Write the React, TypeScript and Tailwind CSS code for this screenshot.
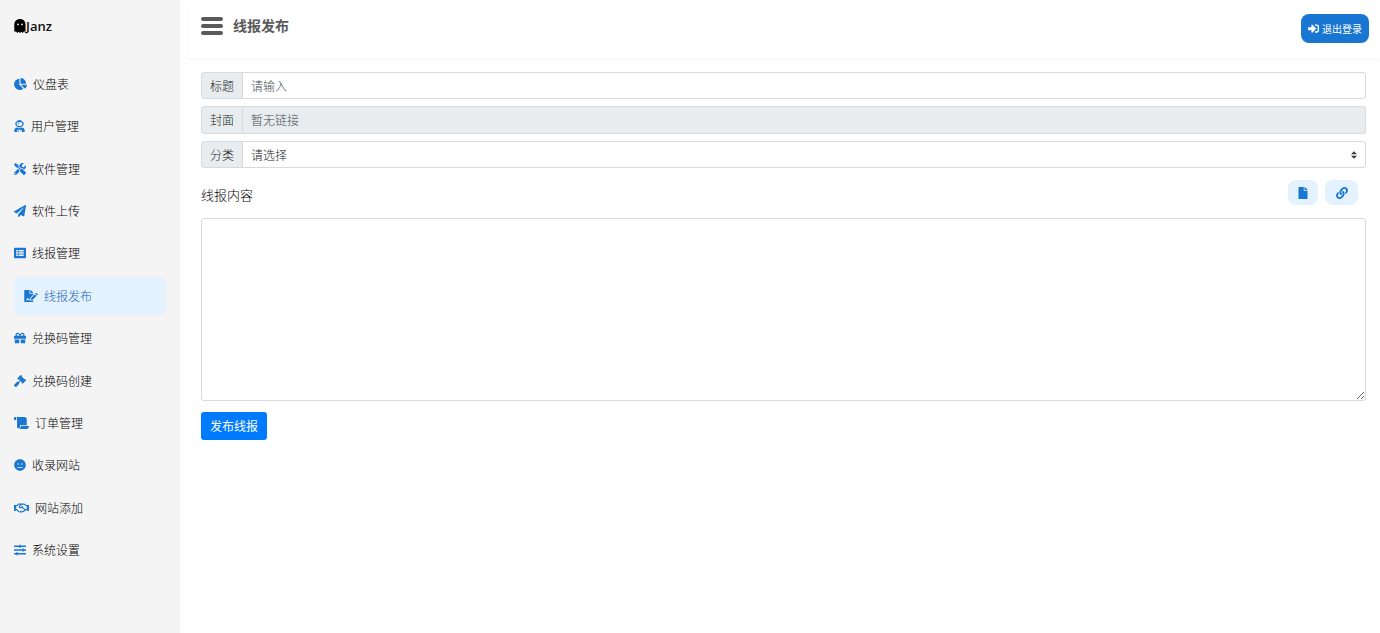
import React, { useState, ChangeEvent } from 'react';
import type { IconType } from 'react-icons';
import {
  FaChartPie,
  FaUserAstronaut,
  FaTools,
  FaPaperPlane,
  FaListAlt,
  FaFileSignature,
  FaGift,
  FaGavel,
  FaScroll,
  FaMeh,
  FaRegHandshake,
  FaSlidersH,
  FaSignInAlt,
  FaFile,
  FaLink,
} from 'react-icons/fa';

interface NavItem {
  label: string;
  icon: IconType;
  iconClass: string;
  active?: boolean;
}

const navItems: NavItem[] = [
  { label: '仪盘表', icon: FaChartPie, iconClass: 'w-[13px]' },
  { label: '用户管理', icon: FaUserAstronaut, iconClass: 'w-[11px]' },
  { label: '软件管理', icon: FaTools, iconClass: 'w-3' },
  { label: '软件上传', icon: FaPaperPlane, iconClass: 'w-3' },
  { label: '线报管理', icon: FaListAlt, iconClass: 'w-3' },
  { label: '线报发布', icon: FaFileSignature, iconClass: 'w-[14px]', active: true },
  { label: '兑换码管理', icon: FaGift, iconClass: 'w-3' },
  { label: '兑换码创建', icon: FaGavel, iconClass: 'w-3' },
  { label: '订单管理', icon: FaScroll, iconClass: 'w-[15px]' },
  { label: '收录网站', icon: FaMeh, iconClass: 'w-3' },
  { label: '网站添加', icon: FaRegHandshake, iconClass: 'w-[15px]' },
  { label: '系统设置', icon: FaSlidersH, iconClass: 'w-3' },
];

const GhostLogo = () => (
  <svg viewBox="0 0 12 14" className="h-[14px] w-3 shrink-0" aria-hidden="true">
    <path
      fill="#000"
      fillRule="evenodd"
      d="M6 0C2.600 0 .3 2.300.3 5.600V12.800L2 12.600 3.400 14 4.700 12.800 6 14 7.300 12.800 8.600 14 10 12.600 11.500 12.800V5.600C11.500 2.300 9.400 0 6 0ZM4 4.500A.9.900 0 1 1 4 6.300.9.900 0 0 1 4 4.500ZM8 4.500A.9.900 0 1 1 8 6.300.9.900 0 0 1 8 4.500Z"
    />
  </svg>
);

const Sidebar = () => (
  <aside className="w-[180px] shrink-0 bg-[#f4f4f4]">
    <a href="#" className="flex h-[52px] items-center pl-[14px] text-[13px] font-semibold text-[#111]">
      <GhostLogo />
      <span>Janz</span>
    </a>
    <nav className="mt-[13px] flex h-[504px] flex-col justify-between px-[14px]">
      {navItems.map(({ label, icon: Icon, iconClass, active }) => (
        <a
          key={label}
          href="#"
          className={
            active
              ? 'flex h-[38px] items-center gap-[6px] rounded-md bg-[#e3f2fd] pl-[10px] text-[#1565c0]'
              : 'flex h-[38px] items-center gap-[6px] text-black'
          }
        >
          <Icon className={`h-3 shrink-0 text-[#1976d2] ${iconClass}`} />
          <span className="pt-0.5">{label}</span>
        </a>
      ))}
    </nav>
  </aside>
);

const Header = () => (
  <header className="ml-2 flex h-[58px] items-start justify-between pr-[11px] pl-[13px] shadow-[0_2px_4px_rgba(0,0,0,0.04)]">
    <div className="flex h-[52px] items-center gap-[10px]">
      <button type="button" aria-label="菜单" className="flex w-[22px] flex-col gap-[3px]">
        <span className="h-1 rounded-sm bg-[#5a5a5a]" />
        <span className="h-1 rounded-sm bg-[#5a5a5a]" />
        <span className="h-1 rounded-sm bg-[#5a5a5a]" />
      </button>
      <h1 className="text-[14px] font-bold text-[#5a5a5a]">线报发布</h1>
    </div>
    <button
      type="button"
      className="mt-[14px] flex h-[29px] items-center gap-[3px] rounded-lg bg-[#1976d2] px-[7px] text-[10px] font-normal text-white"
    >
      <FaSignInAlt className="h-[11px] w-[11px]" />
      退出登录
    </button>
  </header>
);

const labelClass =
  'flex w-[42px] shrink-0 items-center justify-center rounded-l-[3px] border border-[#d6dade] bg-[#e9ecef] pt-0.5 text-[#212529]';
const fieldClass =
  'min-w-0 flex-1 rounded-r-[3px] border border-l-0 border-[#d6dade] px-2 pt-0.5 text-[#212529] outline-none placeholder:text-[#495057]';

export default function App() {
  const [title, setTitle] = useState<string>('');
  const [category, setCategory] = useState<string>('');
  const [content, setContent] = useState<string>('');

  const handleTitleChange = (e: ChangeEvent<HTMLInputElement>) => {
    setTitle(e.target.value);
  };

  return (
    <div className="flex min-h-screen bg-white font-['Open_Sans','Noto_Sans_CJK_SC',sans-serif] text-[12px] leading-[18px] font-light">
      <Sidebar />
      <div className="min-w-0 flex-1">
        <Header />
        <main className="pt-[14px] pr-[14px] pl-[21px]">
          <form onSubmit={(e) => e.preventDefault()}>
            <div className="flex flex-col gap-[7px]">
              <div className="flex h-[27px]">
                <label htmlFor="title" className={labelClass}>标题</label>
                <input
                  id="title"
                  type="text"
                  placeholder="请输入"
                  value={title}
                  onChange={handleTitleChange}
                  className={`${fieldClass} bg-white`}
                />
              </div>
              <div className="flex h-7">
                <label htmlFor="cover" className={labelClass}>封面</label>
                <input
                  id="cover"
                  type="text"
                  placeholder="暂无链接"
                  disabled
                  className={`${fieldClass} bg-[#e9ecef]`}
                />
              </div>
              <div className="flex h-[27px]">
                <label htmlFor="category" className={labelClass}>分类</label>
                <div className="relative flex min-w-0 flex-1">
                  <select
                    id="category"
                    value={category}
                    onChange={(e) => setCategory(e.target.value)}
                    className={`${fieldClass} appearance-none bg-white`}
                  >
                    <option value="">请选择</option>
                  </select>
                  <svg
                    viewBox="0 0 4 5"
                    className="pointer-events-none absolute top-[10px] right-[9px] h-2 w-[6px]"
                    aria-hidden="true"
                  >
                    <path fill="#343a40" d="M2 0L0 2h4zm0 5L0 3h4z" />
                  </svg>
                </div>
              </div>
            </div>

            <div className="mt-3 flex items-start justify-between pr-2">
              <label htmlFor="content" className="pt-[6px] text-[13px] text-black">
                线报内容
              </label>
              <div className="flex gap-[7px] text-[#1976d2]">
                <button
                  type="button"
                  aria-label="文件"
                  className="flex h-[25px] w-[30px] items-center justify-center rounded-lg bg-[#e3f2fd]"
                >
                  <FaFile />
                </button>
                <button
                  type="button"
                  aria-label="链接"
                  className="flex h-[25px] w-[33px] items-center justify-center rounded-lg bg-[#e3f2fd]"
                >
                  <FaLink />
                </button>
              </div>
            </div>

            <textarea
              id="content"
              value={content}
              onChange={(e) => setContent(e.target.value)}
              className="mt-[13px] block h-[183px] w-full resize-y rounded-[3px] border border-[#d6dade] px-2 py-1 text-[#212529] outline-none"
            />
            <button
              type="submit"
              className="mt-[11px] h-7 rounded-[3px] bg-[#007bff] px-[9px] pt-0.5 font-normal text-white"
            >
              发布线报
            </button>
          </form>
        </main>
      </div>
    </div>
  );
}
